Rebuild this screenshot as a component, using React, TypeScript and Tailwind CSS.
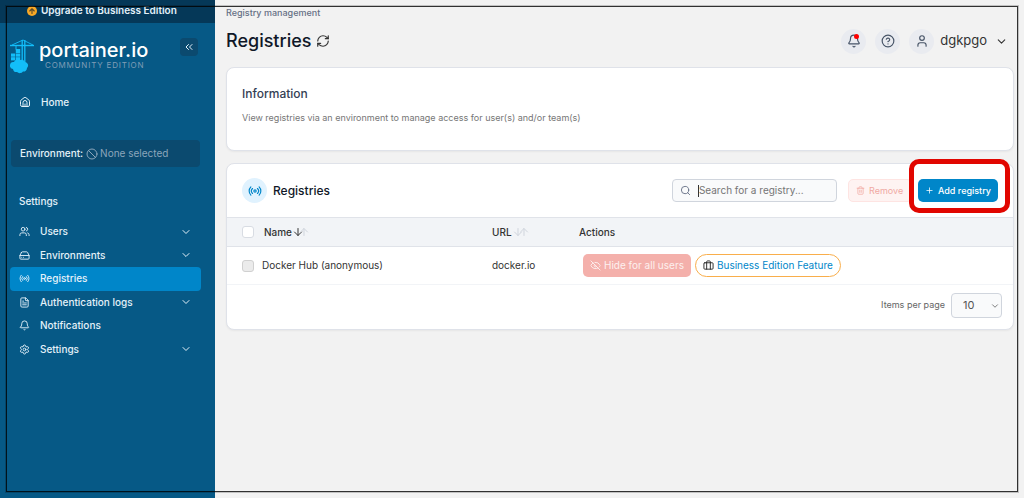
import React, { useState } from 'react';
import {
  ArrowDown,
  ArrowUp,
  Ban,
  Bell,
  Briefcase,
  ChevronDown,
  ChevronsLeft,
  CircleHelp,
  EyeOff,
  FileText,
  HardDrive,
  Plus,
  Radio,
  RefreshCw,
  Search,
  Settings,
  Trash2,
  User,
  Users,
  type LucideIcon,
} from 'lucide-react';

interface NavItem {
  label: string;
  icon: LucideIcon;
  expandable?: boolean;
  active?: boolean;
}

const navItems: NavItem[] = [
  { label: 'Users', icon: Users, expandable: true },
  { label: 'Environments', icon: HardDrive, expandable: true },
  { label: 'Registries', icon: Radio, active: true },
  { label: 'Authentication logs', icon: FileText, expandable: true },
  { label: 'Notifications', icon: Bell },
  { label: 'Settings', icon: Settings, expandable: true },
];

const HomeIcon = () => (
  <svg className="size-3" viewBox="0 0 24 24" fill="none" stroke="currentColor" strokeWidth="2" strokeLinecap="round" strokeLinejoin="round">
    <path d="M8 21v-8a4 4 0 0 1 8 0v8M12 16v5" />
    <path d="M3 10.500a3 3 0 0 1 1.200-2.400l6-4.700a3 3 0 0 1 3.600 0l6 4.700a3 3 0 0 1 1.200 2.400V18a3 3 0 0 1-3 3H6a3 3 0 0 1-3-3Z" />
  </svg>
);

const UpgradeIcon = () => (
  <svg className="size-[10px]" viewBox="0 0 20 20" fill="none" strokeLinecap="round" strokeLinejoin="round">
    <circle cx="10" cy="10" r="10" fill="#f9a825" />
    <path d="M10 15V6M5.500 10 10 5.500l4.500 4.500" stroke="#5b4a2a" strokeWidth="2.200" />
  </svg>
);

const CraneLogo = () => (
  <svg className="h-9 w-6 shrink-0" viewBox="0 0 24 36" fill="none" stroke="#13bef9">
    <path d="M0 7.500h24" strokeWidth="1.400" />
    <path d="M13 2 2 7M13 2l10 5" strokeWidth="0.900" />
    <path d="M12.200 2v24M14.800 2v28" strokeWidth="1.300" />
    <path d="M6 8v3.500" strokeWidth="1" />
    <g fill="#13bef9" stroke="none">
      <rect x="5.800" y="11" width="4.400" height="4" />
      <rect x="1" y="15.500" width="4.200" height="3.200" />
      <rect x="5.800" y="15.500" width="4.400" height="3.200" />
      <rect x="1" y="19.200" width="4.200" height="3.200" />
      <rect x="5.800" y="19.200" width="4.400" height="3.200" />
      <path d="M4 24a4 4 0 0 1 6-2 4 4 0 0 1 5 2 3.500 3.500 0 0 1 2 6 3.500 3.500 0 0 1-4 3.500 4 4 0 0 1-6 .5 3.500 3.500 0 0 1-4-3A3.500 3.500 0 0 1 4 24Z" />
    </g>
  </svg>
);

const Sidebar = () => (
  <aside className="w-[215px] shrink-0 bg-[#065986] text-[10px] font-medium text-[#e4f1f9]">
    <a href="#upgrade" className="flex h-[23px] items-center gap-1 bg-[#053858] pb-0.5 pl-[27px] font-semibold">
      <UpgradeIcon />
      Upgrade to Business Edition
    </a>

    <div className="flex items-start justify-between pt-[15px] pr-[17px] pl-[10px]">
      <div className="flex gap-[5px]">
        <CraneLogo />
        <div>
          <div className="text-xl leading-6 font-medium text-white">portainer.io</div>
          <div className="pl-1.5 text-[8px] leading-[6px] font-normal tracking-widest text-[#7f9db6]">COMMUNITY EDITION</div>
        </div>
      </div>
      <button aria-label="Collapse sidebar" className="flex size-[18px] items-center justify-center rounded bg-[#0b4a6f]">
        <ChevronsLeft className="size-3" />
      </button>
    </div>

    <a href="#home" className="mt-4 flex h-6 items-center gap-[10px] pl-[19px]">
      <HomeIcon />
      Home
    </a>

    <div className="mt-[26px] mr-[15px] ml-[11px] flex h-[27px] items-center rounded-sm bg-[#0b4a6f] pl-[9px]">
      Environment:
      <Ban className="mr-0.5 ml-[3px] size-3 text-[#8ba6bb]" />
      <span className="font-normal text-[#8ba6bb]">None selected</span>
    </div>

    <h2 className="mt-[26px] pl-[19px] leading-4">Settings</h2>
    <nav className="mt-[11px] mr-[14px] ml-[10px] grid h-[141px] grid-rows-6">
      {navItems.map(({ label, icon: Icon, expandable, active }) => (
        <a
          key={label}
          href="#nav"
          className={`flex items-center rounded px-[9px] ${active ? 'bg-[#0086c9]' : ''}`}
        >
          <Icon className="mr-[10px] size-[11px]" />
          <span className="flex-1">{label}</span>
          {expandable && <ChevronDown className="size-3" />}
        </a>
      ))}
    </nav>
  </aside>
);

const PageHeader = () => (
  <header className="pt-[7px]">
    <div className="text-[9px] leading-3 font-medium text-[#667085]">Registry management</div>
    <div className="flex items-center justify-between pt-2 pr-1.5">
      <div className="flex items-center gap-1">
        <h1 className="text-lg leading-7 font-medium text-[#101828]">Registries</h1>
        <button aria-label="Refresh">
          <RefreshCw className="size-[14px] text-[#333333]" />
        </button>
      </div>
      <div className="flex items-center gap-[9px] text-[#475467]">
        <button aria-label="Notifications" className="relative flex size-[25px] items-center justify-center rounded-full bg-[#e9ebf0]">
          <Bell className="size-[14px]" />
          <span className="absolute top-[5px] right-[7px] size-[5px] rounded-full bg-[#ff0000]" />
        </button>
        <button aria-label="Help" className="flex size-[25px] items-center justify-center rounded-full bg-[#e9ebf0]">
          <CircleHelp className="size-[14px]" />
        </button>
        <button className="flex items-center text-[13px] text-[#333333]">
          <span className="mr-1.5 flex size-[25px] items-center justify-center rounded-full bg-[#e9ebf0] text-[#475467]">
            <User className="size-[14px]" />
          </span>
          dgkpgo
          <ChevronDown className="ml-2 size-[13px]" />
        </button>
      </div>
    </div>
  </header>
);

const RegistriesCard = () => {
  const [search, setSearch] = useState('');

  return (
    <section className="mt-3 rounded-lg border border-[#dfe2e9] bg-white pb-1 shadow-xs">
      <div className="flex h-[53px] items-center px-[15px]">
        <span className="flex size-[25px] items-center justify-center rounded-full bg-[#e0f2fe] text-[#0086c9]">
          <Radio className="size-[14px]" />
        </span>
        <h2 className="ml-1.5 flex-1 text-xs font-medium text-[#101828]">Registries</h2>
        <label className="flex h-[23px] w-[165px] items-center rounded-[4px] border border-[#d0d5dd] bg-[#f9fafb] pl-[7px]">
          <Search className="size-[11px] shrink-0 text-[#667085]" />
          <span className="ml-[7px] h-3 w-px bg-[#333333]" />
          <input
            aria-label="Search for a registry"
            value={search}
            onChange={(e) => setSearch(e.target.value)}
            placeholder="Search for a registry..."
            className="w-full min-w-0 bg-transparent text-[10px] text-[#333333] outline-none placeholder:text-[#757575]"
          />
        </label>
        <button disabled className="ml-[11px] flex h-[23px] w-16 items-center gap-1 rounded-[5px] border border-[#fee4e2] bg-[#fef3f2] pl-[7px] text-[9px] text-[#f0a9a3]">
          <Trash2 className="size-[9px]" />
          Remove
        </button>
        <div className="relative ml-1.5">
          <button className="flex h-[23px] w-20 items-center justify-center gap-1 rounded-[5px] bg-[#0086c9] text-[9px] font-medium text-white">
            <Plus className="size-[9px]" />
            Add registry
          </button>
          <span className="pointer-events-none absolute -top-5 -right-3 -bottom-[11px] -left-[9px] rounded-[10px] border-[5px] border-[#e10600]" />
        </div>
      </div>

      <table className="w-full table-fixed text-left text-[10px] text-[#333333]">
        <colgroup>
          <col className="w-[35px]" />
          <col className="w-[230px]" />
          <col className="w-[87px]" />
          <col />
        </colgroup>
        <thead>
          <tr className="h-[29px] border-y border-[#e0e3e9] bg-[#f2f4f7]">
            <th className="pl-[15px]">
              <input type="checkbox" aria-label="Select all" className="block size-3 appearance-none rounded-[3px] border border-[#d8dce3] bg-white" />
            </th>
            <th className="pl-0.5 font-medium">
              <button className="flex items-center">
                Name
                <ArrowDown className="size-3" />
                <ArrowUp className="-ml-1.5 size-3 text-[#d0d5dd]" />
              </button>
            </th>
            <th className="font-medium">
              <button className="flex items-center">
                URL
                <ArrowDown className="size-3 text-[#d0d5dd]" />
                <ArrowUp className="-ml-1.5 size-3 text-[#d0d5dd]" />
              </button>
            </th>
            <th className="font-medium">Actions</th>
          </tr>
        </thead>
        <tbody>
          <tr className="h-[38px] border-b border-[#f2f4f7]">
            <td className="pl-[15px]">
              <input type="checkbox" disabled aria-label="Select Docker Hub" className="block size-3 appearance-none rounded-[3px] border border-[#d0d0d0] bg-[#ebebeb]" />
            </td>
            <td>Docker Hub (anonymous)</td>
            <td>docker.io</td>
            <td>
              <div className="flex items-center gap-1 pl-1">
                <button disabled className="flex h-[23px] items-center gap-[3px] rounded-[5px] bg-[#f4b0ab] px-[7px] text-[#fdf0ef]">
                  <EyeOff className="size-[11px]" />
                  Hide for all users
                </button>
                <a href="#business" className="flex h-[23px] items-center gap-[3px] rounded-full border border-[#f9ae4b] px-[7px] text-[#0086c9]">
                  <Briefcase className="size-[11px] text-[#222222]" />
                  Business Edition Feature
                </a>
              </div>
            </td>
          </tr>
        </tbody>
      </table>

      <div className="flex h-10 items-center justify-end gap-1.5 pr-[11px] text-[#666666]">
        <label htmlFor="page-size" className="text-[9px]">Items per page</label>
        <div className="relative">
          <select id="page-size" defaultValue="10" className="block h-[25px] w-[51px] appearance-none rounded-[4px] border border-[#d0d5dd] bg-[#f9fafb] pl-[11px] text-[11px] text-[#555555]">
            <option>10</option>
            <option>25</option>
            <option>50</option>
          </select>
          <ChevronDown className="pointer-events-none absolute top-2 right-0.5 size-[10px]" />
        </div>
      </div>
    </section>
  );
};

const App: React.FC = () => (
  <div className="flex min-h-screen bg-[#f2f2f2] font-['Inter',sans-serif]">
    <Sidebar />
    <main className="min-w-0 flex-1 pr-[10px] pl-[11px]">
      <PageHeader />
      <section className="mt-3 min-h-[84px] rounded-lg border border-[#dfe2e9] bg-white px-[15px] pt-[18px] shadow-xs">
        <h2 className="text-xs leading-4 font-medium text-[#344054]">Information</h2>
        <p className="mt-2 text-[9px] leading-4 text-[#767676]">
          View registries via an environment to manage access for user(s) and/or team(s)
        </p>
      </section>
      <RegistriesCard />
    </main>
    <div className="pointer-events-none fixed inset-1.5 border border-black/80 ring-1 ring-black/20" />
  </div>
);

export default App;
